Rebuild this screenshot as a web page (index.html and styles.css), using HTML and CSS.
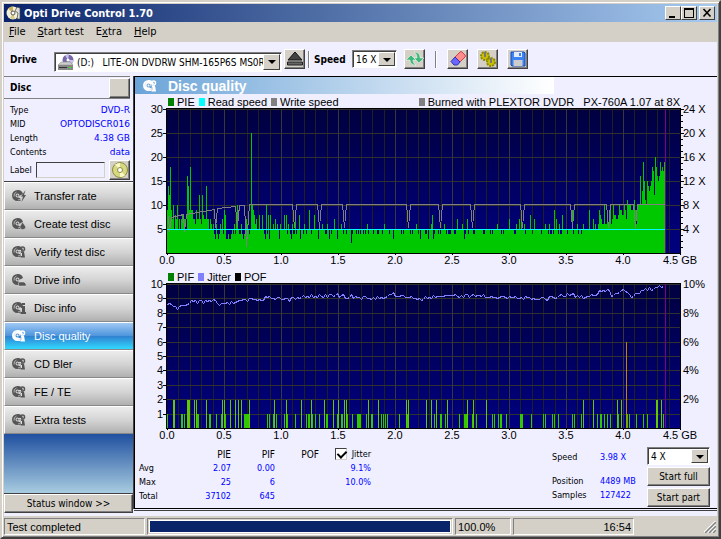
FILE: index.html
```
<!DOCTYPE html>
<html lang="en">
<head>
    <meta charset="UTF-8">
    <meta name="viewport" content="width=device-width, initial-scale=1.0">
    <title>Opti Drive Control 1.70</title>
    <link rel="stylesheet" href="styles.css">
</head>
<body>
    <svg class="defs" aria-hidden="true">
        <symbol id="disc" viewBox="0 0 14 14">
            <path fill="currentColor" fill-rule="evenodd" d="M5.500 1a5.500 5.500 0 1 0 0 11h3V9.500L6 8.500 8 6.500l3-1.500A5.500 5.500 0 0 0 5.500 1zM5.500 4.500a2 2 0 1 1 0 4 2 2 0 0 1 0-4z"/>
            <path d="M2 7.500a4 4 0 0 1 2.500-4.500M9 9.500a4 4 0 0 1-3 1.500" stroke="#ddd" stroke-opacity=".7" fill="none"/>
            <circle cx="5.500" cy="6.500" r="1" fill="currentColor"/>
        </symbol>
        <symbol id="search" viewBox="0 0 14 14">
            <use href="#disc"/>
            <circle cx="10.500" cy="4" r="2" fill="none" stroke="currentColor" stroke-width="1.500"/>
            <path d="M9 6.500h3l1 6H8.500z" fill="currentColor"/>
            <path d="M7 5.500h2M9.500 8v3" stroke="#ddd"/>
        </symbol>
        <symbol id="bolt" viewBox="0 0 14 14">
            <use href="#disc"/>
            <path d="M13.500 1L9 7.500h2L9.500 13 14 6h-2z" fill="currentColor"/>
        </symbol>
        <symbol id="drop" viewBox="0 0 14 14">
            <use href="#disc"/>
            <path d="M10.500 5l3 4.500c1 4-6 4-5.500 0z" fill="currentColor" stroke="#ddd" stroke-width=".5"/>
        </symbol>
        <symbol id="drive" viewBox="0 0 14 14">
            <use href="#disc"/>
            <path d="M7 9h5l2 2v2H6.500v-3z" fill="currentColor" stroke="#ddd" stroke-width=".5"/>
        </symbol>
        <symbol id="info" viewBox="0 0 14 14">
            <use href="#disc"/>
            <path d="M10 2h3v2h-3zM9 5h4v6h1v2H8.500v-2H10V7H9z" fill="currentColor"/>
        </symbol>
    </svg>

    <div class="window">
        <header class="titlebar">
            <svg class="app-icon" viewBox="0 0 16 16">
                <circle cx="7" cy="8" r="6.500" fill="#f4f0d8"/>
                <path d="M7 8L2 3.500A7 7 0 0 1 7 1.500z" fill="#c8b05c"/>
                <path d="M7 8l2 6a7 7 0 0 1-5-1z" fill="#d8cc88"/>
                <circle cx="7" cy="8" r="2" fill="#fff" stroke="#555"/>
                <path d="M11 2l3 1v11h-3l1-6-3-2z" fill="#ddd" stroke="#444" stroke-width=".7"/>
            </svg>
            <h1>Opti Drive Control 1.70</h1>
            <div class="window-buttons">
                <button aria-label="Minimize"><svg viewBox="0 0 14 12"><path d="M3 9h6v2H3z"/></svg></button>
                <button aria-label="Maximize"><svg viewBox="0 0 14 12"><path d="M2 1h10v10H2zM3 3v7h8V3z" fill-rule="evenodd"/></svg></button>
                <button class="close" aria-label="Close"><svg viewBox="0 0 14 12"><path d="M3.500 2l7 7.500M10.500 2l-7 7.500" stroke="#000" stroke-width="1.600"/></svg></button>
            </div>
        </header>

        <nav class="menu">
            <a href="#"><u>F</u>ile</a>
            <a href="#"><u>S</u>tart test</a>
            <a href="#">E<u>x</u>tra</a>
            <a href="#"><u>H</u>elp</a>
        </nav>

        <div class="toolbar">
            <label class="drive-label" for="drive-select">Drive</label>
            <div class="select drive-select">
                <svg class="drive-icon" viewBox="0 0 17 17">
                    <circle cx="11" cy="6" r="5.500" fill="#7468a8"/>
                    <path d="M11 6L8 1.500a6 6 0 0 1 4-1zM11 6l4 4a6 6 0 0 0 1.500-4z" fill="#c8c0e8"/>
                    <circle cx="11" cy="6" r="1.500" fill="#fff"/>
                    <path d="M4 8h9l3 3H1z" fill="#ccc" stroke="#888" stroke-width=".5"/>
                    <path d="M1 11h15v5H1z" fill="#888"/>
                    <path d="M2 13.500h8" stroke="#333"/>
                    <path d="M12 13h2v1h-2z" fill="#0f0"/>
                </svg>
                <select id="drive-select"><option>(D:)&nbsp;&nbsp; LITE-ON DVDRW SHM-165P6S MS0R</option></select>
            </div>
            <button class="tool" aria-label="Eject">
                <svg viewBox="0 0 18 16"><path d="M9 1l7 8H2z" fill="#444" stroke="#111"/><path d="M1.500 11h15v3h-15z" fill="#666" stroke="#222"/></svg>
            </button>
            <span class="separator"></span>
            <label class="speed-label" for="speed-select">Speed</label>
            <div class="select speed-select">
                <select id="speed-select"><option>16 X</option></select>
            </div>
            <button class="tool refresh" aria-label="Refresh">
                <svg viewBox="0 0 18 16"><g fill="#3cb878" stroke="#fff" stroke-width=".5"><path d="M5 4l5 5H7c0 2 1 4 3 5-4 0-6-2-6-5H0z"/><path d="M8 1c4 0 6 2 6 6h4L13 12 8 7h3c0-3-1-5-3-6z"/></g></svg>
            </button>
            <span class="separator"></span>
            <button class="tool erase" aria-label="Erase">
                <svg viewBox="0 0 18 16"><path d="M6 6l5-5q1-1 2 0l3 3q1 1 0 2l-5 5z" fill="#ff8c8c" stroke="#c44"/><path d="M6 6l5 5-2.500 3H5L2 10.500z" fill="#6868ff" stroke="#33a"/></svg>
            </button>
            <button class="tool" aria-label="Options">
                <svg viewBox="0 0 18 16"><g fill="#c8c000" stroke="#8c8800" stroke-dasharray="2 1" stroke-width="2"><circle cx="6" cy="5" r="4"/><circle cx="12" cy="11" r="4"/></g><path d="M6 1v5M12 7v5" stroke="#777" stroke-width="2"/></svg>
            </button>
            <button class="tool" aria-label="Save">
                <svg viewBox="0 0 18 16"><path d="M2 1h13l1 1v13H3l-1-1z" fill="#3c84f4" stroke="#1848b0"/><path d="M5 1h8v5H5z" fill="#e4ecfc"/><path d="M10 2h2v3h-2z" fill="#3c84f4"/><path d="M4.500 9h9v6h-9z" fill="#ccc"/></svg>
            </button>
        </div>

        <div class="content">
            <aside class="sidebar">
                <div class="disc-header">
                    <h2>Disc</h2>
                    <button class="tool" aria-label="Refresh disc"></button>
                </div>
                <dl class="disc-info">
                    <div><dt>Type</dt><dd>DVD-R</dd></div>
                    <div><dt>MID</dt><dd>OPTODISCR016</dd></div>
                    <div><dt>Length</dt><dd>4.38 GB</dd></div>
                    <div><dt>Contents</dt><dd>data</dd></div>
                </dl>
                <div class="disc-label">
                    <label for="disc-label">Label</label>
                    <input type="text" id="disc-label">
                    <button class="tool" aria-label="Write label">
                        <svg viewBox="0 0 18 16"><circle cx="9" cy="8" r="7.500" fill="#d8d880" stroke="#8c8c40"/><path d="M9 8L4 2.500A8 8 0 0 1 9 1zM9 8l5 5.500A8 8 0 0 1 9 15z" fill="#f8f8c8"/><circle cx="9" cy="8" r="2.500" fill="#fff" stroke="#8c8c40"/></svg>
                    </button>
                </div>

                <div class="tests">
                    <button><svg><use href="#bolt"/></svg>Transfer rate</button>
                    <button><svg><use href="#drop"/></svg>Create test disc</button>
                    <button><svg><use href="#search"/></svg>Verify test disc</button>
                    <button><svg><use href="#drive"/></svg>Drive info</button>
                    <button><svg><use href="#info"/></svg>Disc info</button>
                    <button class="active"><svg><use href="#search"/></svg>Disc quality</button>
                    <button><svg><use href="#search"/></svg>CD Bler</button>
                    <button><svg><use href="#search"/></svg>FE / TE</button>
                    <button><svg><use href="#search"/></svg>Extra tests</button>
                </div>
                <div class="filler"></div>
                <button class="push status-toggle">Status window &gt;&gt;</button>
            </aside>

            <main class="panel">
                <div class="panel-title">
                    <svg><use href="#search"/></svg>
                    <h2>Disc quality</h2>
                </div>

                <div class="legend">
                    <span class="key green">PIE</span>
                    <span class="key cyan">Read speed</span>
                    <span class="key gray">Write speed</span>
                    <span class="key gray burned">Burned with PLEXTOR DVDR &nbsp; PX-760A 1.07 at 8X</span>
                </div>
                <div class="chart">
                    <div class="axis left">
                        <span>30</span><span>25</span><span>20</span><span>15</span><span>10</span><span>5</span><span></span>
                    </div>
                    <svg class="plot" id="pie" viewBox="0 0 513 144" preserveAspectRatio="none"></svg>
                    <div class="axis right">
                        <span>24 X</span><span>20 X</span><span>16 X</span><span>12 X</span><span>8 X</span><span>4 X</span><span></span>
                    </div>
                    <div class="axis bottom">
                        <span>0.0</span><span>0.5</span><span>1.0</span><span>1.5</span><span>2.0</span><span>2.5</span><span>3.0</span><span>3.5</span><span>4.0</span><span>4.5 GB</span>
                    </div>
                </div>

                <div class="legend">
                    <span class="key green">PIF</span>
                    <span class="key violet">Jitter</span>
                    <span class="key black">POF</span>
                </div>
                <div class="chart">
                    <div class="axis left">
                        <span>10</span><span>9</span><span>8</span><span>7</span><span>6</span><span>5</span><span>4</span><span>3</span><span>2</span><span>1</span><span></span>
                    </div>
                    <svg class="plot" id="pif" viewBox="0 0 513 144" preserveAspectRatio="none"></svg>
                    <div class="axis right">
                        <span>10%</span><span>8%</span><span>6%</span><span>4%</span><span>2%</span><span></span>
                    </div>
                    <div class="axis bottom">
                        <span>0.0</span><span>0.5</span><span>1.0</span><span>1.5</span><span>2.0</span><span>2.5</span><span>3.0</span><span>3.5</span><span>4.0</span><span>4.5 GB</span>
                    </div>
                </div>

                <div class="results">
                    <table>
                        <thead>
                            <tr>
                                <th></th><th>PIE</th><th>PIF</th><th>POF</th>
                                <th><label><input type="checkbox" checked>Jitter</label></th>
                            </tr>
                        </thead>
                        <tbody>
                            <tr><th>Avg</th><td>2.07</td><td>0.00</td><td></td><td>9.1%</td></tr>
                            <tr><th>Max</th><td>25</td><td>6</td><td></td><td>10.0%</td></tr>
                            <tr><th>Total</th><td>37102</td><td>645</td><td></td><td></td></tr>
                        </tbody>
                    </table>
                    <dl class="progress-info">
                        <dt class="first">Speed</dt><dd class="first">3.98 X</dd>
                        <dt>Position</dt><dd>4489 MB</dd>
                        <dt>Samples</dt><dd>127422</dd>
                    </dl>
                    <div class="actions">
                        <div class="select">
                            <select aria-label="Test speed"><option>4 X</option></select>
                        </div>
                        <button class="push">Start full</button>
                        <button class="push">Start part</button>
                    </div>
                </div>
            </main>
        </div>

        <footer class="statusbar">
            <span class="cell message">Test completed</span>
            <span class="cell bar"><span class="fill"></span></span>
            <span class="cell percent">100.0%</span>
            <span class="cell time">16:54</span>
            <svg class="grip" viewBox="0 0 12 12"><path d="M0 12L12 0M4 12l8-8M8 12l4-4" stroke="#fff" stroke-width="2"/><path d="M1 12L12 1M5 12l7-7M9 12l3-3" stroke="#808080" stroke-width="1.500"/></svg>
        </footer>
    </div>

    <script src="script.js"></script>
</body>
</html>
```
FILE: styles.css
```
* {
    margin: 0;
    padding: 0;
    box-sizing: border-box;
}

body {
    font-family: Tahoma, "DejaVu Sans Condensed", "DejaVu Sans", sans-serif;
    font-size: 9px;
    color: #000;
    background: #d4d0c8;
}

button, select, input {
    font: inherit;
    color: inherit;
}

.defs {
    position: absolute;
    width: 0;
    height: 0;
}

.window {
    display: flex;
    flex-direction: column;
    min-height: 100vh;
    padding: 2px;
    border: 2px solid;
    border-color: #d4d0c8 #404040 #404040 #d4d0c8;
    box-shadow: inset 1px 1px #fff, inset -1px -1px #808080;
}

/* title bar */
.titlebar {
    display: flex;
    align-items: center;
    height: 18px;
    padding: 0 2px;
    background: linear-gradient(to right, #0a246a, #a6caf0);
}

.app-icon {
    width: 16px;
    height: 16px;
    margin-right: 2px;
}

.titlebar h1 {
    flex: 1;
    font-size: 11px;
    color: #fff;
}

.window-buttons {
    display: flex;
}

.window-buttons button {
    width: 16px;
    height: 14px;
    background: #d4d0c8;
    border: 1px solid;
    border-color: #fff #404040 #404040 #fff;
}

.window-buttons svg {
    display: block;
    width: 14px;
    height: 12px;
}

.window-buttons .close {
    margin-left: 2px;
}

.menu {
    display: flex;
    gap: 12px;
    height: 20px;
    padding-left: 5px;
    font-size: 11px;
    line-height: 20px;
}

.menu a {
    color: #000;
    text-decoration: none;
}

/* shared controls */
.tool, .push {
    background: #d4d0c8;
    border: 1px solid;
    border-color: #fff #404040 #404040 #fff;
    box-shadow: inset -1px -1px #808080;
}

.tool {
    display: flex;
    align-items: center;
    justify-content: center;
    flex: none;
    width: 21px;
    height: 20px;
}

.tool svg {
    width: 18px;
    height: 16px;
}

.push {
    height: 19px;
    font-size: 10px;
}

.select {
    position: relative;
    height: 18px;
    background: #fff;
    border: 1px solid;
    border-color: #808080 #fff #fff #808080;
    box-shadow: inset 1px 1px #404040;
}

.select select {
    width: 100%;
    height: 100%;
    padding: 0 18px 0 3px;
    font-size: 10px;
    background: transparent;
    border: none;
    appearance: none;
}

.select::before {
    content: "";
    position: absolute;
    top: 1px;
    right: 1px;
    bottom: 1px;
    width: 15px;
    background: #d4d0c8;
    border: 1px solid;
    border-color: #fff #404040 #404040 #fff;
    pointer-events: none;
}

.select::after {
    content: "";
    position: absolute;
    top: 7px;
    right: 5px;
    border: 4px solid transparent;
    border-top-color: #000;
    border-bottom: none;
    pointer-events: none;
}

/* toolbar */
.toolbar {
    display: flex;
    align-items: center;
    height: 34px;
    padding-left: 6px;
    background: #efefff;
}

.toolbar label {
    font-size: 10px;
    font-weight: bold;
}

.toolbar .drive-label {
    width: 44px;
}

.toolbar .drive-select {
    width: 228px;
    height: 20px;
    margin: 6px 2px 0 0;
}

.drive-select select {
    padding-left: 22px;
}

.drive-icon {
    position: absolute;
    left: 2px;
    top: 1px;
    width: 17px;
    height: 17px;
}

.separator {
    width: 2px;
    height: 17px;
    margin: 0 4px 0 3px;
    background: #808080;
    border-right: 1px solid #fff;
}

.toolbar .speed-label {
    width: 38px;
}

.speed-select {
    width: 45px;
}

.speed-select select {
    padding-right: 0;
}

.refresh {
    margin-left: 7px;
    margin-right: 7px;
}

.erase {
    margin-left: 6px;
}

.toolbar .erase, .erase + .tool {
    margin-right: 9px;
}

/* left column */
.content {
    display: flex;
    flex: 1;
    background: #efefff;
}

.sidebar {
    display: flex;
    flex-direction: column;
    width: 130px;
    padding-right: 1px;
    margin-bottom: 3px;
}

.disc-header {
    display: flex;
    align-items: center;
    justify-content: space-between;
    height: 23px;
    margin-right: 3px;
    padding-left: 6px;
    border-top: 1px solid #808080;
    border-bottom: 1px solid #808080;
}

.disc-header h2 {
    font-size: 10px;
}

.disc-info {
    padding: 4px 3px 0 6px;
}

.disc-info div {
    display: flex;
    justify-content: space-between;
    height: 14px;
    line-height: 14px;
}

.disc-info dd {
    font-family: Verdana, "DejaVu Sans", sans-serif;
}

.disc-info dd, .results td, .results dd {
    color: #00f;
}

.disc-label {
    display: flex;
    align-items: center;
    gap: 4px;
    height: 22px;
    padding: 0 3px 0 6px;
}

.disc-label input {
    flex: 1;
    min-width: 0;
    height: 16px;
    background: #efefff;
    border: 1px solid;
    border-color: #404040 #d4d0c8 #d4d0c8 #404040;
}

.tests {
    border-top: 1px solid #404040;
    font-family: Arial, "Liberation Sans", sans-serif;
    font-size: 11px;
}

.tests button {
    display: flex;
    align-items: center;
    width: 100%;
    height: 28px;
    padding-left: 7px;
    background: linear-gradient(#ececec, #d4d4d4 50%, #b0b0b0);
    border: none;
    border-top: 1px solid #fff;
    border-bottom: 1px solid #888;
    border-left: 1px solid #fff;
}

.tests svg {
    width: 14px;
    height: 14px;
    margin-right: 8px;
    color: #555;
}

.tests .active {
    color: #fff;
    background: linear-gradient(#a0c8f4, #4c94dc 50%, #3080d0 50%, #30d8ff);
}

.tests .active svg, .panel-title svg {
    color: #fff;
}

.filler {
    flex: 1;
    background: linear-gradient(#2050a0, #a8cce0);
    border-bottom: 1px solid #404040;
}

.status-toggle {
    font-size: 10px;
}

/* right side */
.panel {
    flex: 1;
    min-width: 0;
    margin-bottom: 7px;
    border-top: 1px solid #000;
    border-left: 1px solid #000;
    border-bottom: 1px solid #000;
    box-shadow: -1px 0 #404040, 0 1px #efefff, 0 2px #404040;
}

.panel-title {
    display: flex;
    align-items: center;
    width: 72%;
    height: 17px;
    padding-left: 8px;
    background: linear-gradient(to right, #6ca4d8, #fff);
}

.panel-title svg {
    width: 14px;
    height: 14px;
    margin-right: 11px;
}

.panel-title h2 {
    font-family: Arial, "Liberation Sans", sans-serif;
    font-size: 14px;
    color: #fff;
}

.legend {
    display: flex;
    gap: 4px;
    height: 15px;
    padding: 0 37px 0 33px;
    font-family: Arial, "Liberation Sans", sans-serif;
    font-size: 11px;
    line-height: 17px;
    white-space: nowrap;
}

.key::before {
    content: "";
    display: inline-block;
    width: 6px;
    height: 8px;
    margin-right: 3px;
    background: #808080;
}

.key.green::before {
    background: #008000;
}

.key.cyan::before {
    background: #0ff;
}

.key.violet::before {
    background: #8080ff;
}

.key.black::before {
    background: #000;
}

.burned {
    margin-left: auto;
}

.chart {
    display: grid;
    grid-template-columns: 32px 1fr 37px;
    grid-template-rows: 144px 16px;
    font-family: Arial, "Liberation Sans", sans-serif;
    font-size: 11px;
}

.plot {
    width: 100%;
    height: 144px;
    overflow: visible;
    shape-rendering: crispEdges;
}

.axis {
    display: flex;
    justify-content: space-between;
}

.axis.left, .axis.right {
    flex-direction: column;
    line-height: 0;
}

.axis.left {
    align-items: flex-end;
    padding-right: 4px;
}

.axis.right {
    padding-left: 3px;
}

.axis.left span, .axis.right span {
    height: 0;
}

.axis.bottom {
    grid-column: 2;
    line-height: 15px;
}

.axis.bottom span {
    display: flex;
    justify-content: center;
    width: 0;
    white-space: nowrap;
}

/* results */
.results {
    display: flex;
    align-items: flex-start;
    padding: 3px 7px 0 4px;
}

.results table {
    border-collapse: collapse;
    text-align: right;
}

.results tr {
    height: 14px;
}

.results th {
    width: 44px;
    font-weight: normal;
}

.results thead th {
    font-size: 10px;
}

.results tbody th {
    text-align: left;
}

.results th:nth-child(2) {
    width: 48px;
}

.results th:last-child {
    width: 52px;
}

.results th label {
    display: flex;
    align-items: center;
    justify-content: flex-end;
    gap: 5px;
    font-size: 9px;
}

.results input {
    width: 12px;
    height: 12px;
    appearance: none;
    background: #fff;
    border: 1px solid;
    border-color: #404040 #d4d0c8 #d4d0c8 #404040;
}

.results input:checked::before {
    content: "";
    display: block;
    width: 4px;
    height: 7px;
    margin-left: 3px;
    border: solid #000;
    border-width: 0 2px 2px 0;
    transform: rotate(45deg);
}

.progress-info {
    display: grid;
    grid-template-columns: 48px 47px;
    margin-left: auto;
    padding-top: 3px;
    line-height: 14px;
}

.progress-info .first {
    height: 24px;
}

.actions {
    display: flex;
    flex-direction: column;
    gap: 2px;
    width: 63px;
}

/* status bar */
.statusbar {
    display: flex;
    gap: 2px;
    height: 19px;
    padding-top: 2px;
    font-family: Arial, "Liberation Sans", sans-serif;
    font-size: 11px;
    line-height: 16px;
}

.cell {
    padding: 0 2px;
    border: 1px solid;
    border-color: #808080 #fff #fff #808080;
}

.message {
    width: 141px;
}

.bar {
    flex: 1;
    padding: 1px;
}

.fill {
    display: block;
    height: 100%;
    background: #0a246a;
    border: 1px solid #fff;
}

.percent {
    width: 56px;
}

.time {
    width: 121px;
    text-align: right;
}

.grip {
    width: 12px;
    height: 12px;
    margin: 3px 1px 0 68px;
}
```
FILE: script.js
```
const W = 513, H = 144;

// PIE errors at the start of the disc, one value per column
const pieStart = [9,14,12,18,9,7,10,5,8,7,10,5,7,5,7,8,8,7,5,5,16,14,9,18,9,9,7,7,6,9,
    7,7,12,7,6,12,8,7,7,14,7,7,5,7,6,5,6,4,3,6,4,3,4,6,5,7,4,9,8,3,3,4,3,3,4,5,4,6,4,8,
    10,5,4,4,6,4,3,4,5,7,6,5,4,5,25,10,9,8,6,7,5,5];

// and at its end
const pieEnd = [5,5,5,7,5,6,5,5,6,9,8,7,6,6,10,6,6,9,6,7,9,6,7,10,8,8,7,7,8,10,9,9,8,8,
    10,9,7,11,10,10,10,9,9,10,11,9,6,10,10,10,16,10,13,19,15,11,10,15,14,13,14,15,18,
    17,12,20,18,16,15,16,19,17,18,17,19];

const piePeaks = {
    92: 8, 95: 8, 99: 10, 101: 8, 103: 8, 106: 6, 108: 7, 110: 6, 113: 6, 117: 8, 119: 8,
    121: 6, 125: 6, 128: 8, 132: 8, 137: 6, 142: 9, 147: 8, 152: 6, 155: 6, 160: 6, 167: 7,
    174: 6, 184: 2, 200: 6, 217: 6, 249: 6, 264: 6, 265: 8, 277: 6, 290: 7, 295: 6, 300: 7,
    330: 6, 342: 7, 349: 6, 352: 7, 354: 9, 357: 6, 363: 8, 367: 7, 378: 6, 382: 6, 387: 9,
    389: 7, 392: 6, 395: 8, 405: 9, 410: 6, 416: 6, 422: 9
};

const pifTwo = [6,7,20,21,22,27,29,39,55,57,63,68,71,74,82,107,119,134,144,157,166,171,177,
    179,201,211,239,241,259,264,269,280,300,306,319,416,426,450,454,489,490,494];
const pifOne = [0,14,15,17,30,31,42,43,49,54,58,77,78,79,80,81,100,102,106,109,117,120,128,
    139,141,142,145,148,152,159,160,170,174,175,180,185,190,191,192,193,199,204,205,214,
    216,218,220,232,240,267,273,274,278,292,297,298,299,305,309,325,327,331,333,334,339,
    353,354,355,364,376,378,385,387,391,405,407,414,430,433,434,437,440,443,451,459,460,
    462,469,476,480,496];

// small repeatable noise
function noise(i) {
    const v = Math.sin(i * 12.9898) * 43758.5453;
    return v - Math.floor(v);
}

function rect(x, y, w, h, color) {
    return `<rect x="${x}" y="${y}" width="${w}" height="${h}" fill="${color}"/>`;
}

function line(points, color, width = 1) {
    const p = points.map(([x, y]) => `${x + 0.5},${y + 0.5}`).join(" ");
    return `<polyline points="${p}" fill="none" stroke="${color}" stroke-width="${width}"/>`;
}

function background(id, rows) {
    let s = `<defs><linearGradient id="${id}-bg" x2="0" y2="1"><stop stop-color="#000040"/><stop offset="1" stop-color="#000080"/></linearGradient></defs>`;
    s += rect(-1, -1, W + 2, H + 2, "#000") + rect(0, 0, W, H, `url(#${id}-bg)`);
    for (let i = 1; i < 45; i++) {
        if (i % 5) s += rect(Math.round(i * 11.4), 0, 1, H, "#202020");
    }
    for (let i = 0; i <= rows; i++) {
        const y = Math.round(i * H / rows);
        if (i < rows) s += rect(0, y, W, 1, "#303030") + rect(-4, y, 3, 1, "#000");
    }
    for (let i = 0; i <= 9; i++) {
        s += rect(i * 57, H, 1, 2, "#000");
        if (i > 0 && i < 9) s += rect(i * 57, 0, 1, H, "#383838");
    }
    return s;
}

function drawPie() {
    let s = background("pie", 6);
    for (let i = 0; i < 24; i++) {
        s += rect(W + 1, i * 6, i % 4 ? 2 : 3, 1, "#000");
    }
    const endAt = 498 - pieEnd.length;
    for (let x = 0; x < 498; x++) {
        const n = noise(x);
        let v = n < 0.08 ? 3 : n < 0.35 ? 4 : 5;
        if (x > 330 && v < 4) v = 4;
        if (x < pieStart.length) v = pieStart[x];
        else if (x >= endAt) v = pieEnd[x - endAt];
        else if (piePeaks[x]) v = piePeaks[x];
        const h = Math.round(v * 4.8);
        s += rect(x, H - h, 1, h, "#00c800");
    }

    const speed = [[0, 107], [1, 107], [2, 122], [4, 108], [16, 105], [17, 122], [19, 105],
        [47, 100], [48, 118], [50, 99], [68, 97], [70, 117], [72, 96], [77, 96], [79, 137], [82, 95]];
    [127, 152, 177, 241, 273, 305, 355, 405, 441, 468].forEach(x => {
        speed.push([x - 2, 95], [x, 118], [x + 2, 95]);
    });
    speed.push([498, 95]);
    s += line(speed, "#808080");
    s += rect(0, 120, 498, 1, "#0ff");
    s += rect(498, 0, 1, H, "#800080");
    document.getElementById("pie").innerHTML = s;
}

function drawPif() {
    let s = background("pif", 10);
    pifOne.forEach(x => s += rect(x, 130, 1, 14, "#32c800"));
    pifTwo.forEach(x => s += rect(x, 116, 1, 28, "#64c800"));
    s += rect(459, 58, 1, 86, "#c88000");

    const base = [[0, 22], [5, 20], [8, 23], [12, 23], [15, 18], [17, 21], [22, 18], [30, 17],
        [47, 16], [50, 20], [65, 19], [75, 17], [90, 15], [100, 14], [123, 15], [135, 12],
        [170, 11], [205, 14], [225, 10], [250, 14], [285, 11], [310, 11], [345, 13], [384, 14],
        [400, 10], [422, 13], [434, 6], [441, 6], [444, 11], [455, 5], [464, 11], [475, 6],
        [488, 3], [496, 0]];
    const jitter = [];
    for (let x = 0; x <= 496; x += 2) {
        const k = base.findIndex(p => p[0] >= x);
        const [x1, y1] = base[k];
        const [x0, y0] = base[Math.max(k - 1, 0)];
        const y = x1 === x0 ? y1 : y0 + (y1 - y0) * (x - x0) / (x1 - x0);
        jitter.push([x, Math.max(0, Math.round(y + noise(x) * 4 - 2))]);
    }
    s += line(jitter, "#8080ff");
    s += rect(498, 0, 1, H, "#800080");
    document.getElementById("pif").innerHTML = s;
}

drawPie();
drawPif();
```
